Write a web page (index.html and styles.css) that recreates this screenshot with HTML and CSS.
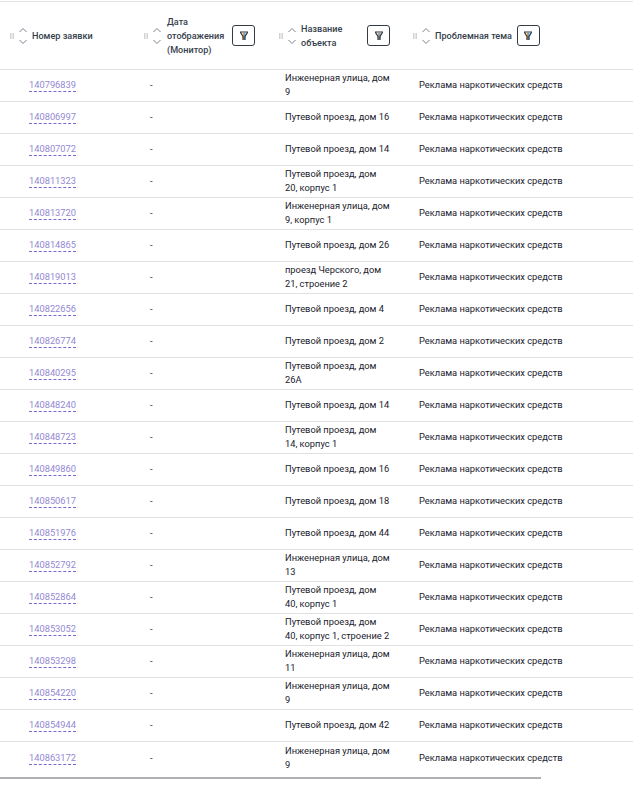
FILE: index.html
```html
<!DOCTYPE html>
<html lang="ru">
<head>
<meta charset="utf-8">
<title>Заявки</title>
<link rel="stylesheet" href="styles.css">
</head>
<body>
<svg class="defs" width="0" height="0" aria-hidden="true">
  <symbol id="sort" viewBox="0 0 10 18"><path d="M1.500 5 5 1.500 8.500 5M1.500 13 5 16.500 8.500 13" fill="none" stroke="#7a8391" stroke-width="1"/></symbol>
  <symbol id="grip" viewBox="0 0 4 6"><path d="M0 0h1.500v6H0zM2.500 0H4v6H2.500z" fill="#d2d2d2"/></symbol>
  <symbol id="funnel" viewBox="0 0 10 10"><path d="M3.800 2h1.400v7L4 8.500z" fill="#e8952c"/><path d="M5.200 2h1.300L6 9H5.200z" fill="#3f94e0"/><path d="M1 1h8M1.500 1.500 4 5.500V9M8.500 1.500 6 5.500V9" fill="none" stroke="#2a333e" stroke-width="1.200"/></symbol>
</svg>
<div class="wrap">
<table class="grid">
<colgroup><col class="c1"><col class="c2"><col class="c3"><col class="c4"></colgroup>
<thead>
<tr>
  <th><div class="head h1"><svg class="grip"><use href="#grip"/></svg><svg class="sort"><use href="#sort"/></svg><span class="title">Номер заявки</span></div></th>
  <th><div class="head h2"><svg class="grip"><use href="#grip"/></svg><svg class="sort"><use href="#sort"/></svg><span class="title t2">Дата отображения (Монитор)</span><button class="filter"><svg class="fn"><use href="#funnel"/></svg></button></div></th>
  <th><div class="head h3"><svg class="grip"><use href="#grip"/></svg><svg class="sort"><use href="#sort"/></svg><span class="title t3">Название объекта</span><button class="filter"><svg class="fn"><use href="#funnel"/></svg></button></div></th>
  <th><div class="head h4"><svg class="grip"><use href="#grip"/></svg><svg class="sort"><use href="#sort"/></svg><span class="title">Проблемная тема</span><button class="filter"><svg class="fn"><use href="#funnel"/></svg></button></div></th>
</tr>
</thead>
<tbody>
<tr><td class="id"><a href="#">140796839</a></td><td class="dash">-</td><td class="obj">Инженерная улица, дом 9</td><td class="topic">Реклама наркотических средств</td></tr>
<tr><td class="id"><a href="#">140806997</a></td><td class="dash">-</td><td class="obj">Путевой проезд, дом 16</td><td class="topic">Реклама наркотических средств</td></tr>
<tr><td class="id"><a href="#">140807072</a></td><td class="dash">-</td><td class="obj">Путевой проезд, дом 14</td><td class="topic">Реклама наркотических средств</td></tr>
<tr><td class="id"><a href="#">140811323</a></td><td class="dash">-</td><td class="obj">Путевой проезд, дом 20, корпус 1</td><td class="topic">Реклама наркотических средств</td></tr>
<tr><td class="id"><a href="#">140813720</a></td><td class="dash">-</td><td class="obj">Инженерная улица, дом 9, корпус 1</td><td class="topic">Реклама наркотических средств</td></tr>
<tr><td class="id"><a href="#">140814865</a></td><td class="dash">-</td><td class="obj">Путевой проезд, дом 26</td><td class="topic">Реклама наркотических средств</td></tr>
<tr><td class="id"><a href="#">140819013</a></td><td class="dash">-</td><td class="obj">проезд Черского, дом 21, строение 2</td><td class="topic">Реклама наркотических средств</td></tr>
<tr><td class="id"><a href="#">140822656</a></td><td class="dash">-</td><td class="obj">Путевой проезд, дом 4</td><td class="topic">Реклама наркотических средств</td></tr>
<tr><td class="id"><a href="#">140826774</a></td><td class="dash">-</td><td class="obj">Путевой проезд, дом 2</td><td class="topic">Реклама наркотических средств</td></tr>
<tr><td class="id"><a href="#">140840295</a></td><td class="dash">-</td><td class="obj">Путевой проезд, дом 26А</td><td class="topic">Реклама наркотических средств</td></tr>
<tr><td class="id"><a href="#">140848240</a></td><td class="dash">-</td><td class="obj">Путевой проезд, дом 14</td><td class="topic">Реклама наркотических средств</td></tr>
<tr><td class="id"><a href="#">140848723</a></td><td class="dash">-</td><td class="obj">Путевой проезд, дом 14, корпус 1</td><td class="topic">Реклама наркотических средств</td></tr>
<tr><td class="id"><a href="#">140849860</a></td><td class="dash">-</td><td class="obj">Путевой проезд, дом 16</td><td class="topic">Реклама наркотических средств</td></tr>
<tr><td class="id"><a href="#">140850617</a></td><td class="dash">-</td><td class="obj">Путевой проезд, дом 18</td><td class="topic">Реклама наркотических средств</td></tr>
<tr><td class="id"><a href="#">140851976</a></td><td class="dash">-</td><td class="obj">Путевой проезд, дом 44</td><td class="topic">Реклама наркотических средств</td></tr>
<tr><td class="id"><a href="#">140852792</a></td><td class="dash">-</td><td class="obj">Инженерная улица, дом 13</td><td class="topic">Реклама наркотических средств</td></tr>
<tr><td class="id"><a href="#">140852864</a></td><td class="dash">-</td><td class="obj">Путевой проезд, дом 40, корпус 1</td><td class="topic">Реклама наркотических средств</td></tr>
<tr><td class="id"><a href="#">140853052</a></td><td class="dash">-</td><td class="obj">Путевой проезд, дом 40, корпус 1, строение 2</td><td class="topic">Реклама наркотических средств</td></tr>
<tr><td class="id"><a href="#">140853298</a></td><td class="dash">-</td><td class="obj">Инженерная улица, дом 11</td><td class="topic">Реклама наркотических средств</td></tr>
<tr><td class="id"><a href="#">140854220</a></td><td class="dash">-</td><td class="obj">Инженерная улица, дом 9</td><td class="topic">Реклама наркотических средств</td></tr>
<tr><td class="id"><a href="#">140854944</a></td><td class="dash">-</td><td class="obj">Путевой проезд, дом 42</td><td class="topic">Реклама наркотических средств</td></tr>
<tr class="last"><td class="id"><a href="#">140863172</a></td><td class="dash">-</td><td class="obj">Инженерная улица, дом 9</td><td class="topic">Реклама наркотических средств</td></tr>
</tbody>
</table>
<div class="scrollbar"></div>
</div>
</body>
</html>
```
FILE: styles.css
```css
* { box-sizing: border-box; }
html, body { margin: 0; padding: 0; background: #fff; }
body { font-family: Roboto, "Liberation Sans", sans-serif; color: #1a212c; overflow: hidden; }
.defs { position: absolute; }
.wrap { padding-top: 1px; }
.grid { width: 633px; table-layout: fixed; border-collapse: separate; border-spacing: 0; border-top: 1px solid #e4e4e4; }
.c1 { width: 143px; }
.c2 { width: 135px; }
.c3 { width: 134px; }
.c4 { width: 221px; }
th { height: 68px; padding: 0; border-bottom: 1px solid #e1e1e1; font-weight: 500; text-align: left; vertical-align: middle; }
td { height: 32px; padding: 0 0 2px; border-bottom: 1px solid #e1e1e1; font-size: 9.3px; line-height: 14px; vertical-align: middle; }
tr.last td { border-bottom: 0; height: 33px; padding-bottom: 2px; }
.head { display: flex; align-items: center; font-size: 9.1px; line-height: 14px; color: #353e4b; }
.h1 { padding-left: 10px; }
.h2 { padding-left: 1px; }
.h3 { padding-left: 1px; }
.h4 { padding-left: 1px; }
.grip { width: 4px; height: 6px; flex: none; }
.sort { width: 10px; height: 18px; flex: none; margin-left: 4px; }
.title { margin-left: 5px; }
.h1 .title, .h3 .title, .h4 .title { margin-left: 4px; }
.t2 { width: 62px; flex: none; }
.t3 { width: 54px; flex: none; }
.filter { width: 23px; height: 21px; padding: 0; background: #fff; border: 1px solid #333b45; border-radius: 3px; display: flex; align-items: center; justify-content: center; flex: none; }
.h2 .filter { margin-left: 3px; }
.h3 .filter { margin-left: 12px; }
.h4 .filter { margin-left: 5px; }
.fn { width: 10px; height: 10px; }
.id { padding-left: 29px; }
.id a { font-size: 9.3px; color: #9488d4; text-decoration: none; border-bottom: 1px dashed #7a66cc; padding-bottom: 1px; }
.dash { padding-left: 7px; }
.obj { padding-left: 7px; padding-right: 21px; }
.topic { padding-left: 7px; }
.scrollbar { width: 541px; height: 2px; margin-top: 2px; background: #b0b0b4; }
```
